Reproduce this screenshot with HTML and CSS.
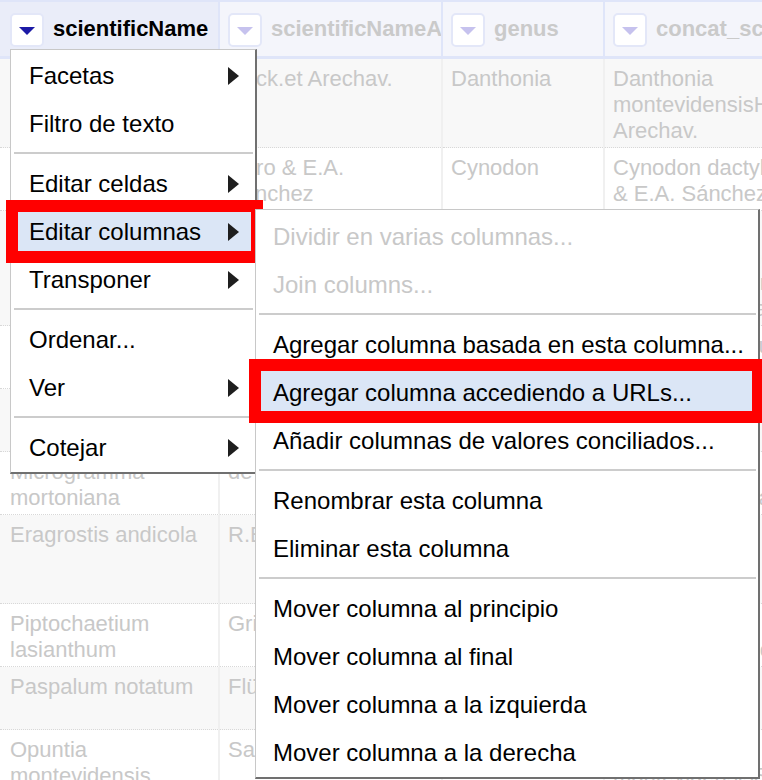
FILE: index.html
```html
<!DOCTYPE html>
<html lang="es">
<head>
<meta charset="utf-8">
<title>OpenRefine - Editar columnas</title>
<link rel="stylesheet" href="styles.css">
</head>
<body>
<table class="grid">
  <colgroup>
    <col class="c1"><col class="c2"><col class="c3"><col class="c4">
  </colgroup>
  <thead>
    <tr>
      <th class="hd active"><div class="hcell"><span class="btn"><span class="tri"></span></span><span class="hname">scientificName</span></div></th>
      <th class="hd"><div class="hcell"><span class="btn"><span class="tri"></span></span><span class="hname">scientificNameAuthorship</span></div></th>
      <th class="hd"><div class="hcell"><span class="btn"><span class="tri"></span></span><span class="hname">genus</span></div></th>
      <th class="hd"><div class="hcell"><span class="btn"><span class="tri"></span></span><span class="hname">concat_scientificName</span></div></th>
    </tr>
  </thead>
  <tbody>
    <tr class="odd"><td>Danthonia montevidensis</td><td>Hack.et Arechav.</td><td>Danthonia</td><td>Danthonia<br>montevidensisHack.et<br>Arechav.</td></tr>
    <tr><td>Cynodon dactylon</td><td>Caro &amp; E.A.<br>Sánchez</td><td>Cynodon</td><td>Cynodon dactylonCaro<br>&amp; E.A. Sánchez</td></tr>
    <tr class="odd"><td>Schizachyrium microstachyum</td><td>(Desv. ex Ham.) Roseng., B.R. Arrill. &amp; Izag.</td><td>Schizachyrium</td><td>Schizachyrium<br>microstachyum(Desv.<br>ex Ham.) Roseng.,<br>B.R. Arrill. &amp; Izag.</td></tr>
    <tr><td>Bromus auleticus</td><td>Trin. ex Nees</td><td>Bromus</td><td>Bromus auleticusTrin.<br>ex Nees</td></tr>
    <tr class="odd"><td>Stipa neesiana</td><td>Trin. &amp; Rupr.</td><td>Stipa</td><td>Stipa neesianaTrin.<br>&amp; Rupr.</td></tr>
    <tr><td>Microgramma mortoniana</td><td>de la Sota</td><td>Microgramma</td><td>Microgramma<br>mortonianade la Sota</td></tr>
    <tr class="odd"><td>Eragrostis andicola</td><td>R.E. Fr.</td><td>Eragrostis</td><td>Eragrostis<br>andicolaR.E.<br>Fr.</td></tr>
    <tr><td>Piptochaetium lasianthum</td><td>Griseb.</td><td>Piptochaetium</td><td>Piptochaetium<br>lasianthumGriseb.</td></tr>
    <tr class="odd"><td>Paspalum notatum</td><td>Flüggé</td><td>Paspalum</td><td>Paspalum<br>notatumFlüggé</td></tr>
    <tr><td>Opuntia montevidensis</td><td>Salm-Dyck</td><td>Opuntia</td><td>Opuntia<br>montevidensisSalm-Dyck</td></tr>
  </tbody>
</table>

<div class="menu main-menu">
  <div class="item"><span>Facetas</span><span class="arrow"></span></div>
  <div class="item"><span>Filtro de texto</span></div>
  <div class="sep"></div>
  <div class="item"><span>Editar celdas</span><span class="arrow"></span></div>
  <div class="item hover"><span>Editar columnas</span><span class="arrow"></span><span class="mark mark-main"></span></div>
  <div class="item"><span>Transponer</span><span class="arrow"></span></div>
  <div class="sep"></div>
  <div class="item"><span>Ordenar...</span></div>
  <div class="item"><span>Ver</span><span class="arrow"></span></div>
  <div class="sep"></div>
  <div class="item"><span>Cotejar</span><span class="arrow"></span></div>
</div>

<div class="menu sub-menu">
  <div class="item disabled"><span>Dividir en varias columnas...</span></div>
  <div class="item disabled"><span>Join columns...</span></div>
  <div class="sep"></div>
  <div class="item"><span>Agregar columna basada en esta columna...</span></div>
  <div class="item hover"><span>Agregar columna accediendo a URLs...</span><span class="mark mark-sub"></span></div>
  <div class="item"><span>Añadir columnas de valores conciliados...</span></div>
  <div class="sep"></div>
  <div class="item"><span>Renombrar esta columna</span></div>
  <div class="item"><span>Eliminar esta columna</span></div>
  <div class="sep"></div>
  <div class="item"><span>Mover columna al principio</span></div>
  <div class="item"><span>Mover columna al final</span></div>
  <div class="item"><span>Mover columna a la izquierda</span></div>
  <div class="item"><span>Mover columna a la derecha</span></div>
</div>
</body>
</html>
```
FILE: styles.css
```css
html, body {
  margin: 0;
  padding: 0;
  background: #ffffff;
  overflow: hidden;
  width: 762px;
  height: 780px;
}

body {
  position: relative;
  font-family: "Liberation Sans", Arial, sans-serif;
}

.grid {
  table-layout: fixed;
  border-collapse: separate;
  border-spacing: 0;
  width: 904px;
}

.c1 { width: 220px; }
.c2 { width: 223px; }
.c3 { width: 162px; }
.c4 { width: 299px; }

.hd {
  height: 54px;
  padding: 0 8px;
  background: #f4f5fb;
  border-top: 2px solid #dfe5f9;
  border-bottom: 3px solid #dfe5f9;
  border-right: 2px solid #dfe5f9;
  text-align: left;
  white-space: nowrap;
  overflow: hidden;
}

.hd.active {
  background: #eaedf9;
  padding-left: 10px;
}

.hcell {
  display: flex;
  align-items: center;
  gap: 9px;
  font-size: 22px;
  font-weight: bold;
  color: #cacaca;
}

.active .hcell { color: #000; }

.btn {
  flex: none;
  width: 30px;
  height: 30px;
  border: 2px solid #e3e7f8;
  border-radius: 5px;
  background: #fff;
  display: flex;
  align-items: center;
  justify-content: center;
  margin-top: 1px;
}

.tri {
  width: 0;
  height: 0;
  border-left: 8.5px solid transparent;
  border-right: 8.5px solid transparent;
  border-top: 8px solid #c6c2ee;
  margin-top: 2px;
}

.active .tri { border-top-color: #1c1aa6; }

.grid td {
  vertical-align: top;
  padding: 7px 8px 3px 8px;
  font-size: 22px;
  line-height: 26px;
  color: #c8c8c8;
  border-right: 2px solid #f0f0f0;
  border-bottom: 1px dotted #d8d8d8;
  overflow: hidden;
}

.grid td:first-child { padding-left: 10px; }

.grid tr.odd td { background: #f8f8f8; }

/* menus */
.menu {
  position: absolute;
  box-sizing: border-box;
  background: #fff;
  border-left: 1px solid #c8c8c8;
  border-top: 1px solid #c8c8c8;
  border-right: 2px solid #707070;
  border-bottom: 2px solid #707070;
  font-size: 24px;
  color: #000;
}

.main-menu {
  left: 10px;
  top: 49px;
  width: 247px;
  padding-top: 2px;
  z-index: 2;
}

.sub-menu {
  left: 255px;
  top: 209px;
  width: 505px;
  padding-top: 3px;
  z-index: 3;
}

.item {
  position: relative;
  height: 48px;
  display: flex;
  align-items: center;
  justify-content: space-between;
  padding: 0 16px 0 18px;
  white-space: nowrap;
}

.sub-menu .item { padding-left: 17px; }

.item.hover { background: #dbe6f6; }

.item.disabled { color: #c8c8c8; }

.arrow {
  width: 0;
  height: 0;
  border-left: 11px solid #1e1e1e;
  border-top: 9px solid transparent;
  border-bottom: 9px solid transparent;
}

.sep {
  height: 2px;
  background: #cccccc;
  margin: 4px 2px 6px 3px;
}

.mark {
  position: absolute;
  box-sizing: border-box;
  border: 12px solid #ff0000;
  z-index: 5;
  pointer-events: none;
}

.mark-main {
  left: -5px;
  top: -8px;
  right: -8px;
  bottom: -7px;
}

.mark-sub {
  left: -7px;
  top: -10px;
  right: -6px;
  bottom: -6px;
}
```
